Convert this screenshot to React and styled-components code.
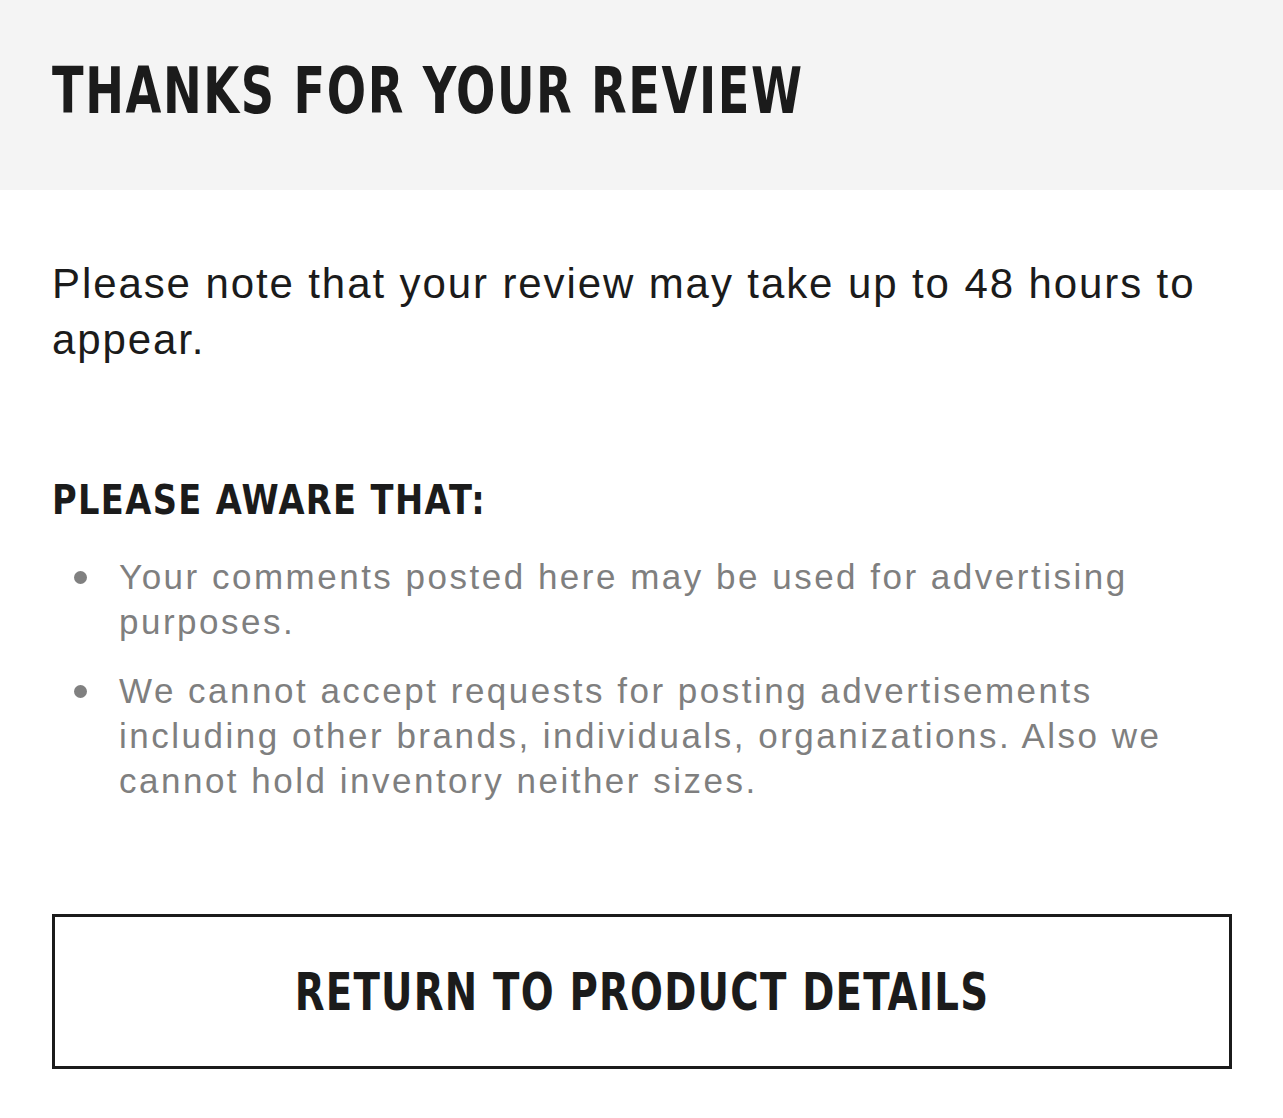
import React from 'react'
import styled, { createGlobalStyle } from 'styled-components'

const GlobalStyle = createGlobalStyle`
body {
  margin:0;
  background:#ffffff;
  font-family:"Liberation Sans", Arial, sans-serif;
  color:#1b1b1b;
}
`

// condensed bold display type, squeezed to the narrow brand face
const Display = styled.span`
display:inline-block;
font-family:"DejaVu Sans Condensed", "DejaVu Sans", sans-serif;
font-stretch:condensed;
font-weight:700;
color:#1b1b1b;
white-space:nowrap;
transform:scaleX(${p => p.$squeeze});
transform-origin:${p => p.$origin || 'left center'};
`

// header band
const Header = styled.header`
background:#f4f4f4;
height:190px;
padding:59px 52px 0;
box-sizing:border-box;
`
const Title = styled.h1`
margin:0;
font-size:64px;
line-height:64px;
letter-spacing:2px;
`

// content
const Content = styled.main`
padding:66px 51px 40px 52px;
display:flex;
flex-direction:column;
`
const Note = styled.p`
margin:0;
font-size:42px;
line-height:56px;
letter-spacing:1.9px;
color:#1b1b1b;
`
const SubTitle = styled.h2`
margin:108px 0 0;
font-size:41px;
line-height:48px;
letter-spacing:1.5px;
`
const List = styled.ul`
margin:30px 0 0;
padding:0;
list-style:none;
display:flex;
flex-direction:column;
gap:24px;
`
const Item = styled.li`
display:flex;
align-items:flex-start;
font-size:35px;
line-height:45px;
letter-spacing:2.5px;
color:#7f7f7f;
`
const Dot = styled.span`
flex:none;
width:13px;
height:13px;
border-radius:50%;
background:#808080;
margin:17px 32px 0 22px;
`
const Button = styled.button`
margin-top:111px;
height:155px;
width:100%;
background:#ffffff;
border:3px solid #1b1b1b;
padding:0;
display:flex;
align-items:center;
justify-content:center;
cursor:pointer;
`
const ButtonLabel = styled(Display)`
font-size:52px;
line-height:52px;
letter-spacing:1.5px;
`

const notes = [
    'Your comments posted here may be used for advertising purposes.',
    'We cannot accept requests for posting advertisements including other brands, individuals, organizations. Also we cannot hold inventory neither sizes.',
]

const App = () => {
    return (
        <>
            <GlobalStyle />
            <Header>
                <Title>
                    <Display $squeeze={0.804}>THANKS FOR YOUR REVIEW</Display>
                </Title>
            </Header>
            <Content>
                <Note>Please note that your review may take up to 48 hours to appear.</Note>
                <SubTitle>
                    <Display $squeeze={0.913}>PLEASE AWARE THAT:</Display>
                </SubTitle>
                <List>
                    {notes.map(text => (
                        <Item key={text}>
                            <Dot />
                            <span>{text}</span>
                        </Item>
                    ))}
                </List>
                <Button>
                    <ButtonLabel $squeeze={0.827} $origin="center">RETURN TO PRODUCT DETAILS</ButtonLabel>
                </Button>
            </Content>
        </>
    )
}

export default App
